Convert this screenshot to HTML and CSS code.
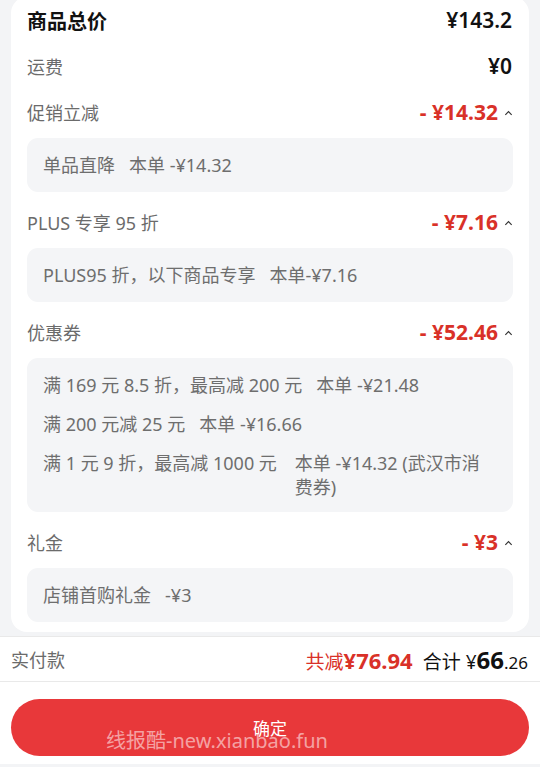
FILE: index.html
```html
<!DOCTYPE html>
<html lang="zh-CN">
<head>
  <meta charset="UTF-8">
  <title>价格明细</title>
  <link rel="stylesheet" href="styles.css">
</head>
<body>
  <main class="sheet">
    <section class="card">
      <div class="row row-total">
        <span class="label-main">商品总价</span>
        <span class="amount-black">¥143.2</span>
      </div>
      <div class="row">
        <span class="label">运费</span>
        <span class="amount-black">¥0</span>
      </div>

      <div class="row">
        <span class="label">促销立减</span>
        <span class="amount-red">- ¥14.32 <svg class="caret" viewBox="0 0 10 6"><path d="M1.5 5 L5 1.5 L8.5 5"/></svg></span>
      </div>
      <div class="detail">
        <p>单品直降&nbsp;&nbsp;&nbsp;本单 -¥14.32</p>
      </div>

      <div class="row">
        <span class="label">PLUS 专享 95 折</span>
        <span class="amount-red">- ¥7.16 <svg class="caret" viewBox="0 0 10 6"><path d="M1.5 5 L5 1.5 L8.5 5"/></svg></span>
      </div>
      <div class="detail">
        <p>PLUS95 折，以下商品专享&nbsp;&nbsp;&nbsp;本单-¥7.16</p>
      </div>

      <div class="row">
        <span class="label">优惠券</span>
        <span class="amount-red">- ¥52.46 <svg class="caret" viewBox="0 0 10 6"><path d="M1.5 5 L5 1.5 L8.5 5"/></svg></span>
      </div>
      <div class="detail detail-list">
        <p>满 169 元 8.5 折，最高减 200 元&nbsp;&nbsp;&nbsp;本单 -¥21.48</p>
        <p>满 200 元减 25 元&nbsp;&nbsp;&nbsp;本单 -¥16.66</p>
        <p class="split"><span>满 1 元 9 折，最高减 1000 元</span><span>本单 -¥14.32 (武汉市消费券)</span></p>
      </div>

      <div class="row">
        <span class="label">礼金</span>
        <span class="amount-red">- ¥3 <svg class="caret" viewBox="0 0 10 6"><path d="M1.5 5 L5 1.5 L8.5 5"/></svg></span>
      </div>
      <div class="detail">
        <p>店铺首购礼金&nbsp;&nbsp;&nbsp;-¥3</p>
      </div>
    </section>

    <div class="pay-bar">
      <span class="label">实付款</span>
      <span class="pay-sum">
        <span class="cut">共减<b>¥76.94</b></span>
        <span class="total">合计 ¥<b>66</b><small>.26</small></span>
      </span>
    </div>

    <div class="action">
      <button class="confirm">确定</button>
      <span class="watermark">线报酷-new.xianbao.fun</span>
    </div>
  </main>
</body>
</html>
```

FILE: styles.css
```css
body {
  margin: 0;
  background-color: #f3f4f6;
  font-family: "Noto Sans", "Noto Sans CJK SC", sans-serif;
  color: #1a1a1a;
  overflow: hidden;
}

.sheet {
  width: 540px;
  height: 767px;
}

.card {
  background-color: #fff;
  margin: -3px 11px 0;
  padding: 0 16px 10px;
  border-radius: 16px;
}

.row {
  height: 46px;
  display: flex;
  align-items: center;
  justify-content: space-between;
}

.label-main {
  font-size: 20px;
  font-weight: bold;
  color: #111;
}

.label {
  font-size: 18px;
  color: #6b6b6b;
}

.amount-black {
  font-size: 21px;
  font-weight: 600;
  color: #111;
  margin-right: 1px;
}

.amount-red {
  display: flex;
  align-items: center;
  gap: 6px;
  font-size: 21px;
  font-weight: bold;
  color: #d93128;
}

.caret {
  width: 9px;
  height: 6px;
  fill: none;
  stroke: #333;
  stroke-width: 1.3;
  margin-top: 2px;
}

.detail {
  background-color: #f4f5f7;
  border-radius: 11px;
  margin: 3px 0 7px;
  padding: 15px 16px;
}

.detail:last-child {
  margin-bottom: 0;
}

.detail p {
  margin: 0;
  font-size: 18px;
  line-height: 24px;
  color: #6e6e6e;
}

.detail-list {
  padding-bottom: 13px;
  display: flex;
  flex-direction: column;
  gap: 15px;
}

.split {
  display: flex;
  gap: 18px;
}

.split span:last-child {
  flex: 1;
}

.pay-bar {
  margin-top: 4px;
  height: 44px;
  background-color: #fff;
  border-top: 1px solid #e9e9e9;
  border-bottom: 1px solid #e9e9e9;
  padding: 0 12px 0 11px;
  display: flex;
  align-items: center;
  justify-content: space-between;
}

.pay-sum {
  display: flex;
  align-items: baseline;
  gap: 10px;
}

.cut {
  font-size: 19px;
  color: #d93128;
}

.cut b {
  font-size: 22px;
}

.total {
  font-size: 19px;
  color: #111;
}

.total b {
  font-size: 24px;
}

.total small {
  font-size: 17px;
}

.action {
  position: relative;
  background-color: #fff;
  padding: 17px 11px 11px;
}

.confirm {
  display: block;
  width: 100%;
  height: 57px;
  border: none;
  border-radius: 29px;
  background-color: #e8383a;
  color: #fff;
  font-family: inherit;
  font-size: 17px;
}

.watermark {
  position: absolute;
  left: 106px;
  top: 43px;
  font-size: 20px;
  color: rgba(255, 255, 255, 0.55);
  pointer-events: none;
}
```
